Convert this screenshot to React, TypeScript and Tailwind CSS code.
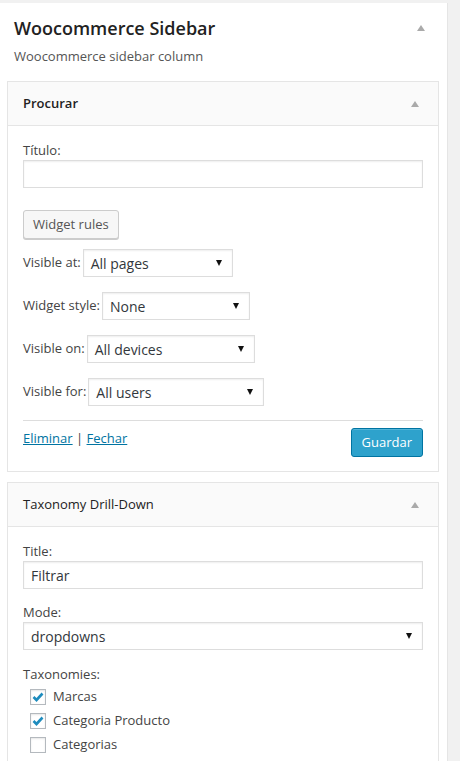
import React from 'react';

// Small grey "collapse" arrow used in panel headers
function UpArrow() {
  return (
    <svg width="8" height="6" viewBox="0 0 8 6" className="block">
      <path d="M4 0 L8 6 L0 6 Z" fill="#aaa" />
    </svg>
  );
}

function FakeSelect({ value, width }: { value: string; width: string }) {
  return (
    <div
      className={`${width} h-[28px] flex items-center justify-between pl-[7px] pr-[10px] bg-white border border-[#ddd] shadow-[inset_0_1px_2px_rgba(0,0,0,0.07)] text-[14px] text-[#32373c]`}
    >
      <span>{value}</span>
      <svg width="6" height="6" viewBox="0 0 6 6">
        <path d="M0 0 L6 0 L3 6 Z" fill="#111" />
      </svg>
    </div>
  );
}

function RuleRow({ label, value, width }: { label: string; value: string; width: string }) {
  return (
    <div className="flex items-center gap-[2px] mt-[15px] first:mt-0">
      <span className="text-[13px] text-[#444]">{label}</span>
      <FakeSelect value={value} width={width} />
    </div>
  );
}

function Checkbox({ checked, label }: { checked: boolean; label: string }) {
  return (
    <div className="flex items-center h-[24px] pl-[7px]">
      <div className="w-[16px] h-[16px] border border-[#b4b9be] bg-white shadow-[inset_0_1px_2px_rgba(0,0,0,0.1)] flex items-center justify-center">
        {checked && (
          <svg width="12" height="10" viewBox="0 0 12 10">
            <path d="M1.5 5 L4.5 8 L10.5 1.5" fill="none" stroke="#1e8cbe" strokeWidth="2.6" />
          </svg>
        )}
      </div>
      <span className="ml-[7px] text-[13px] text-[#444]">{label}</span>
    </div>
  );
}

function WidgetHeader({ title, bold }: { title: string; bold?: boolean }) {
  return (
    <div className="h-[44px] bg-[#fafafa] border-b border-[#e5e5e5] flex items-center justify-between pl-[15px] pr-[19px]">
      <span className={`text-[13px] text-[#222] ${bold ? 'font-semibold' : 'font-normal'}`}>{title}</span>
      <UpArrow />
    </div>
  );
}

export default function App() {
  return (
    <div
      className="min-h-[761px] bg-[#f1f1f1] pt-[3px] overflow-hidden"
      style={{ fontFamily: '"Open Sans", "Noto Sans", sans-serif' }}
    >
      <div className="w-[448px] bg-white border-r border-[#e5e5e5] pl-[7px] pr-[8px] pt-[13px] pb-[20px]">
        {/* sidebar heading */}
        <div className="flex items-center justify-between pl-[7px] pr-[14px]">
          <h2 className="text-[18px] leading-[24px] font-semibold text-[#222]">Woocommerce Sidebar</h2>
          <UpArrow />
        </div>
        <p className="pl-[7px] mt-[6px] text-[13px] leading-[20px] text-[#555]">Woocommerce sidebar column</p>

        {/* Procurar widget */}
        <div className="mt-[15px] border border-[#e5e5e5] bg-white">
          <WidgetHeader title="Procurar" bold />
          <div className="px-[15px] pt-[15px] pb-[14px]">
            <label className="block text-[13px] leading-[18px] text-[#444]">Título:</label>
            <div className="mt-[1px] h-[28px] border border-[#ddd] shadow-[inset_0_1px_2px_rgba(0,0,0,0.07)]" />
            <button className="mt-[22px] h-[29px] px-[9px] bg-[#f7f7f7] border border-[#ccc] rounded-[3px] shadow-[0_1px_0_#ccc] text-[13px] text-[#555]">
              Widget rules
            </button>
            <div className="mt-[10px]">
              <RuleRow label="Visible at:" value="All pages" width="w-[150px]" />
              <RuleRow label="Widget style:" value="None" width="w-[148px]" />
              <RuleRow label="Visible on:" value="All devices" width="w-[168px]" />
              <RuleRow label="Visible for:" value="All users" width="w-[176px]" />
            </div>
            <div className="mt-[14px] border-t border-[#ddd] pt-[7px] flex items-start justify-between">
              <div className="text-[13px] text-[#444] mt-[1px]">
                <a className="text-[#0074a2] underline">Eliminar</a> | <a className="text-[#0074a2] underline">Fechar</a>
              </div>
              <button className="h-[29px] px-[10px] bg-[#2ea2cc] border border-[#0074a2] rounded-[3px] shadow-[inset_0_1px_0_rgba(120,200,230,0.5)] text-[13px] text-white">
                Guardar
              </button>
            </div>
          </div>
        </div>

        {/* Taxonomy Drill-Down widget */}
        <div className="mt-[10px] border border-[#e5e5e5] bg-white">
          <WidgetHeader title="Taxonomy Drill-Down" />
          <div className="px-[15px] pt-[15px] pb-[14px]">
            <label className="block text-[13px] leading-[18px] text-[#444]">Title:</label>
            <div className="mt-[1px] h-[28px] border border-[#ddd] shadow-[inset_0_1px_2px_rgba(0,0,0,0.07)] flex items-center px-[7px] text-[14px] text-[#32373c]">
              Filtrar
            </div>
            <label className="block mt-[14px] text-[13px] leading-[18px] text-[#444]">Mode:</label>
            <div className="mt-[1px]">
              <FakeSelect value="dropdowns" width="w-full" />
            </div>
            <label className="block mt-[15px] text-[13px] leading-[18px] text-[#444]">Taxonomies:</label>
            <div className="mt-[2px]">
              <Checkbox checked label="Marcas" />
              <Checkbox checked label="Categoria Producto" />
              <Checkbox checked={false} label="Categorias" />
            </div>
          </div>
        </div>
      </div>
    </div>
  );
}
